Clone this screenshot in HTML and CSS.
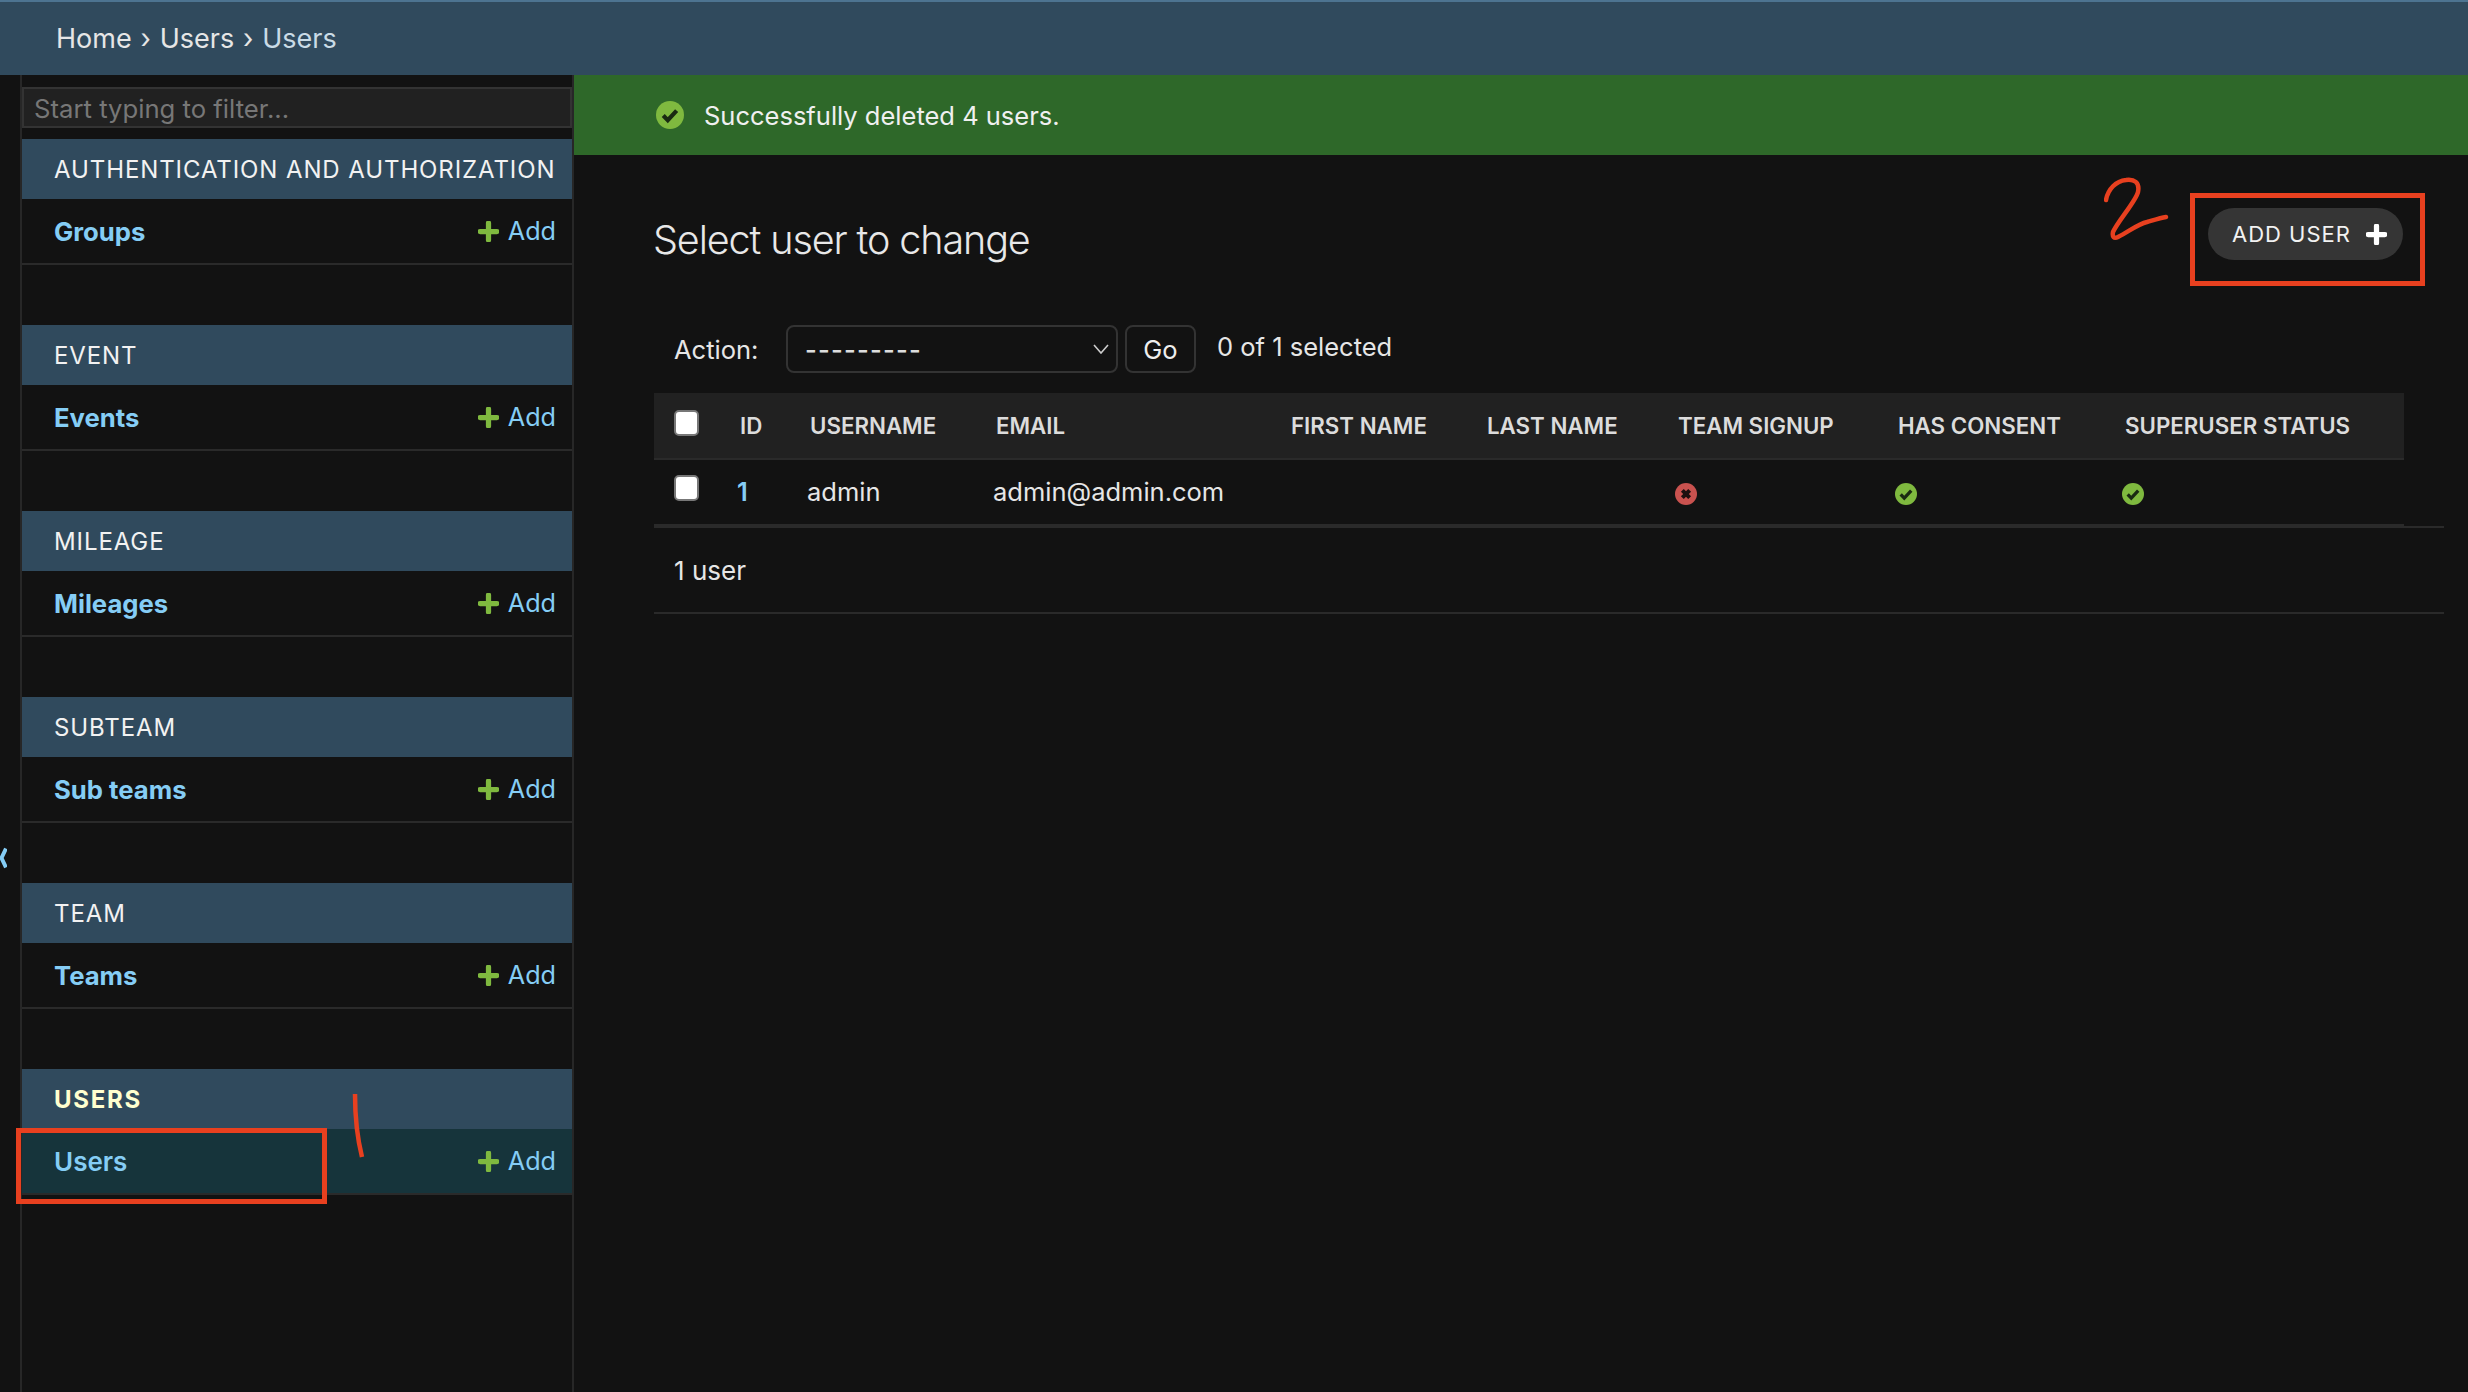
FILE: index.html
```html
<!DOCTYPE html>
<html lang="en">
<head>
<meta charset="utf-8">
<title>Select user to change</title>
<link rel="stylesheet" href="styles.css">
</head>
<body>
<svg class="defs" width="0" height="0" aria-hidden="true">
  <symbol id="i-yes" viewBox="0 0 24 24"><circle cx="12" cy="12" r="12" fill="#7fb93f"/><path d="M6.2 12.5l3.9 4 7.6-8.2" fill="none" stroke="#1a2a12" stroke-width="3.6"/></symbol>
  <symbol id="i-no" viewBox="0 0 24 24"><circle cx="12" cy="12" r="12" fill="#c9524f"/><path d="M8 8l8 8M16 8l-8 8" fill="none" stroke="#1c1010" stroke-width="4.4"/></symbol>
  <symbol id="i-add" viewBox="0 0 20 20"><path d="M10 2v16M2 10h16" fill="none" stroke="currentColor" stroke-width="5" stroke-linecap="round"/></symbol>
</svg>
<header class="topbar"><a>Home</a> › <a>Users</a> › <span class="crumb-current">Users</span></header>
<div class="layout">
  <div class="gutter"><svg class="toggle" width="7" height="22" viewBox="0 0 7 22"><path d="M6 1.5L1.5 11 6 20.5" fill="none" stroke="#85cdf5" stroke-width="4"/></svg></div>
  <nav class="sidebar">
    <input class="filter" type="text" placeholder="Start typing to filter...">
    <section class="app"><h2 class="app-title">AUTHENTICATION AND AUTHORIZATION</h2>
      <div class="app-row"><a class="model">Groups</a><a class="add"><svg class="add-icon"><use href="#i-add"/></svg>Add</a></div></section>
    <section class="app"><h2 class="app-title">EVENT</h2>
      <div class="app-row"><a class="model">Events</a><a class="add"><svg class="add-icon"><use href="#i-add"/></svg>Add</a></div></section>
    <section class="app"><h2 class="app-title">MILEAGE</h2>
      <div class="app-row"><a class="model">Mileages</a><a class="add"><svg class="add-icon"><use href="#i-add"/></svg>Add</a></div></section>
    <section class="app"><h2 class="app-title">SUBTEAM</h2>
      <div class="app-row"><a class="model">Sub teams</a><a class="add"><svg class="add-icon"><use href="#i-add"/></svg>Add</a></div></section>
    <section class="app"><h2 class="app-title">TEAM</h2>
      <div class="app-row"><a class="model">Teams</a><a class="add"><svg class="add-icon"><use href="#i-add"/></svg>Add</a></div></section>
    <section class="app"><h2 class="app-title app-title-current">USERS</h2>
      <div class="app-row app-row-current"><a class="model model-current">Users</a><a class="add"><svg class="add-icon"><use href="#i-add"/></svg>Add</a></div></section>
  </nav>
  <main class="main">
    <div class="message"><svg class="message-icon"><use href="#i-yes"/></svg><span>Successfully deleted 4 users.</span></div>
    <div class="content">
      <div class="title-row">
        <h1 class="title">Select user to change</h1>
        <a class="add-user">ADD USER<svg class="add-user-icon"><use href="#i-add"/></svg></a>
      </div>
      <div class="actions">
        <span class="action-label">Action:</span>
        <div class="select"><span class="select-value">---------</span><svg class="caret" width="16" height="10" viewBox="0 0 16 10"><path d="M1 1l7 8 7-8" fill="none" stroke="#ccc" stroke-width="1.6"/></svg></div>
        <button class="go" type="button">Go</button>
        <span class="counter">0 of 1 selected</span>
      </div>
      <div class="results">
        <table class="table">
          <colgroup><col class="c-cb"><col class="c-id"><col class="c-user"><col class="c-email"><col class="c-first"><col class="c-last"><col class="c-team"><col class="c-cons"><col class="c-super"></colgroup>
          <thead><tr>
            <th class="cell-cb"><span class="check"></span></th><th>ID</th><th>USERNAME</th><th>EMAIL</th><th>FIRST NAME</th><th>LAST NAME</th><th>TEAM SIGNUP</th><th>HAS CONSENT</th><th>SUPERUSER STATUS</th>
          </tr></thead>
          <tbody><tr>
            <td class="cell-cb"><span class="check"></span></td><td><a class="id-link">1</a></td><td>admin</td><td>admin@admin.com</td><td></td><td></td>
            <td><svg class="bool"><use href="#i-no"/></svg></td><td><svg class="bool"><use href="#i-yes"/></svg></td><td><svg class="bool"><use href="#i-yes"/></svg></td>
          </tr></tbody>
        </table>
      </div>
      <p class="paginator">1 user</p>
    </div>
  </main>
</div>
<div class="mark mark-users"></div>
<div class="mark mark-add"></div>
<svg class="scribble scribble-one" width="14" height="66" viewBox="0 0 14 66"><path d="M3 1C3 24 5 44 10 64" fill="none" stroke="#e8401f" stroke-width="4.5"/></svg>
<svg class="scribble scribble-two" width="66" height="64" viewBox="0 0 66 64"><path d="M2 23C4 12 12 4 22 3 30 2 36 5 34 15 32 24 14 44 9 55 8 60 10 62 14 60 24 55 34 47 43 45 50 43 56 41 62 40" fill="none" stroke="#e8401f" stroke-width="4.5" stroke-linecap="round" stroke-linejoin="round"/></svg>
</body>
</html>
```
FILE: styles.css
```css
* { box-sizing: border-box; }
html, body { margin: 0; height: 100%; }
body { background: #121212; color: #e6e6e6; font-family: Inter, "Liberation Sans", sans-serif; font-size: 25.5px; overflow: hidden; position: relative; }
.defs { position: absolute; }
.topbar { height: 75px; background: #304a5d; border-top: 2px solid #4d7491; padding: 0 56px; display: flex; align-items: center; gap: 8.8px; color: #e6e6e6; font-size: 27px; }
.crumb-current { color: #c9dbe6; }
.layout { display: flex; height: 1317px; }
.gutter { width: 22px; flex: none; border-right: 2px solid #272727; position: relative; }
.toggle { position: absolute; left: 0; top: 772px; }
.sidebar { width: 552px; flex: none; border-right: 2px solid #272727; padding-top: 12px; }
.filter { display: block; width: 100%; height: 41px; margin: 0 0 11px; padding: 2px 10px 0; background: #212121; border: 2px solid #333; color: #e6e6e6; font: 25.7px Inter, "Liberation Sans", sans-serif; outline: 0; }
.filter::placeholder { color: #777; opacity: 1; }
.app { margin-bottom: 60px; }
.app-title { margin: 0; height: 60px; display: flex; align-items: center; padding-left: 32px; background: #304a5d; color: #f2f2f2; font-size: 24px; font-weight: 400; letter-spacing: 0.9px; white-space: nowrap; }
.app-title-current { color: #ffffcf; font-weight: 700; letter-spacing: 1.7px; }
.app-row { height: 66px; display: flex; align-items: center; justify-content: space-between; padding: 0 16px 0 32px; border-bottom: 2px solid #2a2a2a; }
.app-row-current { background: #16343b; }
.model { color: #85cdf5; font-size: 25.7px; font-weight: 700; }
.model-current { font-size: 26px; font-weight: 600; }
.add { color: #85cdf5; font-size: 25.2px; display: flex; align-items: center; gap: 9px; }
.add-icon { width: 21px; height: 21px; color: #7fb93f; }
.main { flex: 1; min-width: 0; }
.message { height: 80px; background: #2e6829; display: flex; align-items: center; gap: 20px; padding-left: 82px; color: #f0f0f0; font-size: 25.5px; }
.message-icon { width: 28px; height: 28px; }
.content { padding: 0 24px 0 80px; }
.title-row { height: 170px; display: flex; justify-content: space-between; align-items: flex-start; }
.title { margin: 60px 0 0 -1px; font-size: 39.5px; font-weight: 300; line-height: 50px; color: #e8e8e8; letter-spacing: -1.1px; }
.add-user { margin: 53px 41px 0 0; width: 195px; height: 52px; border-radius: 26px; background: #353535; color: #f2f2f2; display: flex; align-items: center; gap: 15px; padding-left: 24px; font-size: 22px; letter-spacing: 1px; }
.add-user-icon { width: 21px; height: 21px; color: #fff; }
.actions { height: 48px; margin-bottom: 20px; display: flex; align-items: center; padding-left: 20px; }
.action-label { width: 112px; }
.select { width: 332px; height: 48px; border: 2px solid #333; border-radius: 8px; display: flex; align-items: center; justify-content: space-between; padding: 0 7px 0 17px; color: #ddd; }
.select-value { letter-spacing: 1.2px; font-weight: 500; }
.go { width: 71px; height: 48px; margin-left: 7px; background: #121212; border: 2px solid #333; border-radius: 8px; color: #eee; font: 25.5px Inter, "Liberation Sans", sans-serif; padding: 0; }
.counter { margin-left: 21px; padding-bottom: 6px; }
.results { width: 1790px; border-bottom: 2px solid #2a2a2a; }
.table { width: 1750px; table-layout: fixed; border-collapse: collapse; }
.c-cb { width: 76px; } .c-id { width: 70px; } .c-user { width: 186px; } .c-email { width: 295px; } .c-first { width: 196px; } .c-last { width: 191px; } .c-team { width: 220px; } .c-cons { width: 227px; } .c-super { width: 289px; }
.table th { height: 66px; padding: 1px 0 1px 10px; background: #212121; border-bottom: 2px solid #2a2a2a; text-align: left; font-size: 22.3px; font-weight: 600; color: #dcdcdc; white-space: nowrap; }
.table th.cell-cb { padding: 0 0 5px 20px; }
.table td { height: 66px; padding: 0 0 1px 7px; border-bottom: 2px solid #2a2a2a; white-space: nowrap; }
.table td.cell-cb { padding: 0 0 8px 20px; }
.check { display: block; width: 25px; height: 26px; border: 2px solid #777; border-radius: 5px; background: #fff; }
.id-link { color: #85cdf5; font-weight: 600; }
.bool { display: block; width: 22px; height: 22px; margin-top: 4px; }
.paginator { margin: 0; width: 1790px; height: 86px; padding: 0 0 0 20px; line-height: 86px; font-size: 26px; border-bottom: 2px solid #2a2a2a; }
.mark { position: absolute; border: 5px solid #e8401f; pointer-events: none; }
.mark-users { left: 16px; top: 1128px; width: 311px; height: 76px; }
.mark-add { left: 2190px; top: 193px; width: 235px; height: 93px; }
.scribble { position: absolute; pointer-events: none; }
.scribble-one { left: 352px; top: 1093px; }
.scribble-two { left: 2104px; top: 177px; }
```
